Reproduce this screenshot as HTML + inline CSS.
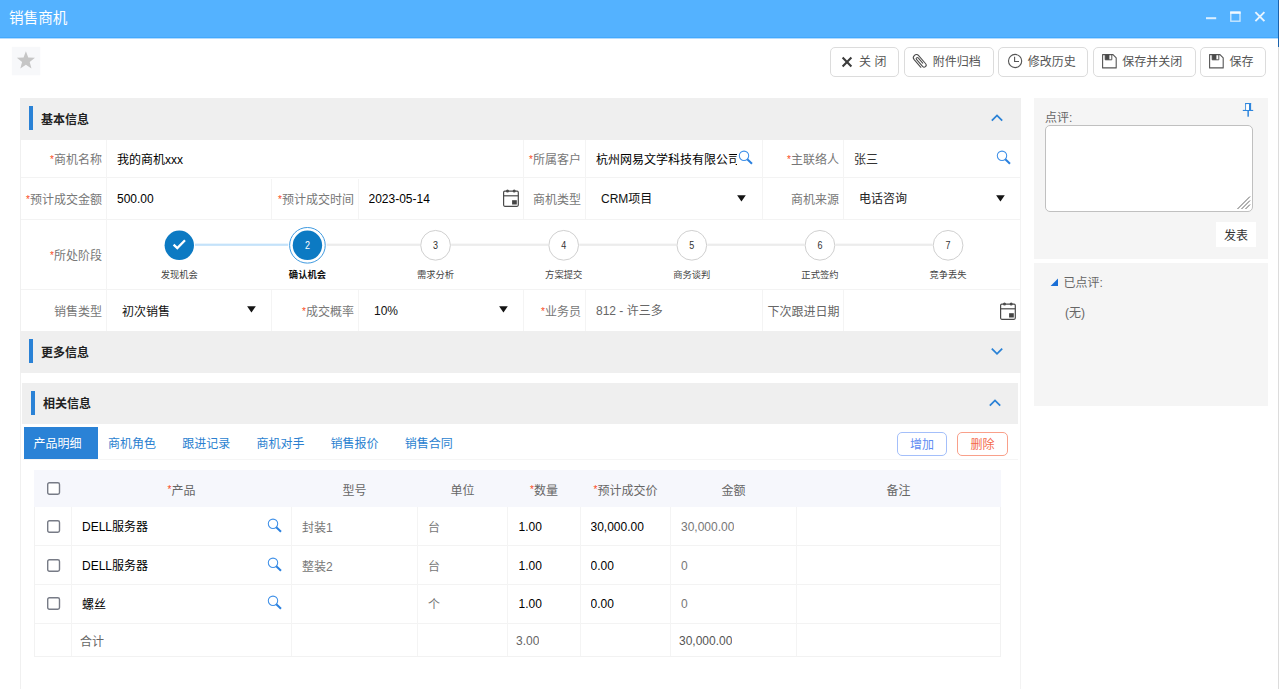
<!DOCTYPE html>
<html lang="zh-CN">
<head>
<meta charset="utf-8">
<title>销售商机</title>
<style>
*{box-sizing:border-box;margin:0;padding:0}
html,body{width:1279px;height:689px;overflow:hidden;background:#fff}
body{position:relative;font-family:"Liberation Sans","Noto Sans CJK SC",sans-serif;font-size:12px;color:#000;line-height:1}
.abs{position:absolute}
/* title bar */
#titlebar{left:0;top:0;width:1278px;height:38px;background:#54b2ff}
#titlebar .t{left:9px;top:0;line-height:36px;font-size:14.6px;color:#fff}
#edge{left:1278px;top:0;width:1px;height:689px;background:#dcdcdc}
#edge i{display:block;width:1px;height:47px;background:#1c63ad}
/* toolbar */
.btn{top:47px;height:29.5px;border:1px solid #dcdcdc;border-radius:5px;background:#fff;color:#555;font-size:12px;line-height:29px;white-space:nowrap}
.btn svg{position:absolute}
.btn span{position:absolute;top:0;height:29px}
/* left panel */
#lpanel{left:20px;top:98px;width:1001px;height:600px;border-left:1px solid #f0f0f0;border-right:1px solid #f3f3f3}
.sec{height:42px;background:#efefef}
.sec b{position:absolute;font-size:12px;font-weight:bold;color:#222;line-height:42px;top:0}
.sec i{position:absolute;width:4px;height:24px;background:#2a82d6}
.sec svg{position:absolute}
.hl{height:1px;background:#f3f3f3}
.vl{width:1px;background:#f4f4f4}
.lab{color:#777;text-align:right;white-space:nowrap;height:20px;line-height:20px;transform:translateY(0.7px)}
.lab em{color:#fa4a20;font-style:normal;font-size:10px;position:relative;top:-1.5px}
.val{white-space:nowrap;height:20px;line-height:20px;overflow:hidden}
/* tabs */
.tab{top:427px;height:32.4px;line-height:34px;color:#2a7fd0;padding-left:10px;width:74.3px;white-space:nowrap}
.tab.on{background:#2a82d6;color:#fff}
.sbtn{top:432px;height:24px;border-radius:5px;line-height:24px;text-align:center;background:#fff}
/* grid */
#grid{left:34px;top:470px;width:967px;height:187px;border:1px solid #f2f2f2}
.th{color:#666;text-align:center;top:471px;height:36px;line-height:38px;transform:translateY(0.5px)}
.th em{color:#fa4a20;font-style:normal;font-size:10px;position:relative;top:-2px;line-height:1}
.g{color:#777}
.cj{transform:translateY(0.7px)}
/* right */
.rp{left:1034px;width:234px;background:#f5f5f5}
</style>
</head>
<body>
<div id="titlebar" class="abs">
  <div class="abs t">销售商机</div>
  <svg class="abs" style="left:1200px;top:8px" width="70" height="20" viewBox="0 0 70 20">
    <rect x="6" y="9.2" width="10.2" height="2" fill="#dcefff"/>
    <rect x="30.8" y="4.4" width="9.2" height="8.8" fill="none" stroke="#d2eaff" stroke-width="1.3"/>
    <rect x="30.2" y="3.4" width="10.4" height="2.4" fill="#f2f9ff"/>
    <path d="M55.4 4.2 L64.4 13.2 M64.4 4.2 L55.4 13.2" stroke="#e8f4ff" stroke-width="1.9" fill="none"/>
  </svg>
</div>
<div class="abs" style="left:0;top:37px;width:1278px;height:1px;background:#43a9fd"></div>
<div class="abs" style="left:0;top:38px;width:1278px;height:1px;background:#b4dcfe"></div>
<div id="edge" class="abs"><i></i></div>

<svg class="abs" style="left:11px;top:46px" width="31" height="31" viewBox="0 0 31 31"><rect x="0.8" y="0.8" width="28.5" height="28.5" fill="#f7f8fa"/><path d="M14.90 5.30 L17.25 11.56 L23.94 11.86 L18.70 16.04 L20.48 22.49 L14.90 18.80 L9.32 22.49 L11.10 16.04 L5.86 11.86 L12.55 11.56 Z" fill="#c6c6c6"/></svg>

<!-- toolbar -->
<div class="abs btn" style="left:830.3px;width:69.2px">
  <svg style="left:10px;top:7.5px" width="12" height="12" viewBox="0 0 12 12"><path d="M1.6 1.6 L10.4 10.4 M10.4 1.6 L1.6 10.4" stroke="#3c3c3c" stroke-width="2.1" fill="none"/></svg>
  <span style="left:27.8px">关 闭</span>
</div>
<div class="abs btn" style="left:904px;width:89.5px">
  <svg style="left:6px;top:4px" width="18" height="18" viewBox="0 0 18 18"><g transform="translate(8.6 9.3) rotate(229) scale(0.93) translate(-8.75 -3.2)"><path d="M3 0 L14 0 A3.2 3.2 0 0 1 14 6.4 L2.5 6.4 A2.2 2.2 0 0 1 2.5 2 L12.5 2 A1.2 1.2 0 0 1 12.5 4.4 L5 4.4" stroke="#4d4d4d" stroke-width="1.15" fill="none" stroke-linecap="round"/></g></svg>
  <span style="left:27.8px">附件归档</span>
</div>
<div class="abs btn" style="left:998.2px;width:90.3px">
  <svg style="left:7.7px;top:4.3px" width="18" height="18" viewBox="0 0 18 18"><circle cx="8.1" cy="9" r="6.6" stroke="#555" stroke-width="1.1" fill="none"/><path d="M7.6 4.8 V9.5 H12" stroke="#555" stroke-width="1.1" fill="none"/></svg>
  <span style="left:28.5px">修改历史</span>
</div>
<div class="abs btn" style="left:1092.5px;width:103.3px">
  <svg style="left:8.6px;top:5.5px" width="16" height="16" viewBox="0 0 16 16"><path d="M0.6 0.6 H11 L14.2 3.8 V13.9 H0.6 Z" stroke="#555" stroke-width="1.1" fill="none" stroke-linejoin="round"/><path d="M3.2 0.6 V5.8 H9.8 V0.6" stroke="#555" stroke-width="1" fill="none"/><rect x="3.2" y="0.6" width="4.2" height="5.2" fill="#4a4a4a"/></svg>
  <span style="left:28.8px">保存并关闭</span>
</div>
<div class="abs btn" style="left:1199.8px;width:66.2px">
  <svg style="left:8.6px;top:5.5px" width="16" height="16" viewBox="0 0 16 16"><path d="M0.6 0.6 H11 L14.2 3.8 V13.9 H0.6 Z" stroke="#555" stroke-width="1.1" fill="none" stroke-linejoin="round"/><path d="M3.2 0.6 V5.8 H9.8 V0.6" stroke="#555" stroke-width="1" fill="none"/><rect x="3.2" y="0.6" width="4.2" height="5.2" fill="#4a4a4a"/></svg>
  <span style="left:28.8px">保存</span>
</div>

<div id="lpanel" class="abs"></div>

<!-- ===== 基本信息 ===== -->
<div class="abs sec" style="left:20px;top:98px;width:1001px">
  <i style="left:9px;top:8px"></i><b style="left:21px;top:1px">基本信息</b>
  <svg style="left:970px;top:14.3px" width="14" height="12" viewBox="0 0 14 12"><path d="M1.8 8.6 L7 3.4 L12.2 8.6" stroke="#2a82d6" stroke-width="1.8" fill="none"/></svg>
</div>

<!-- horizontal lines -->
<div class="abs hl" style="left:21px;top:177px;width:1000px"></div>
<div class="abs hl" style="left:21px;top:219px;width:1000px"></div>
<div class="abs hl" style="left:21px;top:289px;width:1000px"></div>
<!-- vertical lines -->
<div class="abs vl" style="left:106px;top:140px;height:191px"></div>
<div class="abs vl" style="left:523px;top:140px;height:79px"></div>
<div class="abs vl" style="left:585px;top:140px;height:79px"></div>
<div class="abs vl" style="left:762px;top:140px;height:79px"></div>
<div class="abs vl" style="left:843px;top:140px;height:79px"></div>
<div class="abs vl" style="left:271px;top:179px;height:40px"></div>
<div class="abs vl" style="left:358px;top:179px;height:40px"></div>
<div class="abs vl" style="left:271px;top:290px;height:41px"></div>
<div class="abs vl" style="left:358px;top:290px;height:41px"></div>
<div class="abs vl" style="left:523px;top:290px;height:41px"></div>
<div class="abs vl" style="left:585px;top:290px;height:41px"></div>
<div class="abs vl" style="left:762px;top:290px;height:41px"></div>
<div class="abs vl" style="left:843px;top:290px;height:41px"></div>

<!-- row 1 -->
<div class="abs lab" style="left:21px;width:81px;top:149px"><em>*</em>商机名称</div>
<div class="abs val cj" style="left:117px;top:149px;width:380px">我的商机xxx</div>
<div class="abs lab" style="left:524px;width:57px;top:149px"><em>*</em>所属客户</div>
<div class="abs val cj" style="left:596px;top:149px;width:140.7px">杭州网易文学科技有限公司</div>
<svg class="abs" style="left:737.9px;top:150.2px" width="16" height="16" viewBox="0 0 16 16"><circle cx="6" cy="5.8" r="4.7" stroke="#3f90e8" stroke-width="1.05" fill="none"/><path d="M9.3 9.2 L14 13.7" stroke="#2a80df" stroke-width="2"/></svg>
<div class="abs lab" style="left:763px;width:76px;top:149px"><em>*</em>主联络人</div>
<div class="abs val cj" style="left:854px;top:149px;width:130px;color:#333">张三</div>
<svg class="abs" style="left:996.2px;top:150.2px" width="16" height="16" viewBox="0 0 16 16"><circle cx="6" cy="5.8" r="4.7" stroke="#3f90e8" stroke-width="1.05" fill="none"/><path d="M9.3 9.2 L14 13.7" stroke="#2a80df" stroke-width="2"/></svg>

<!-- row 2 -->
<div class="abs lab" style="left:21px;width:81px;top:189px"><em>*</em>预计成交金额</div>
<div class="abs val" style="left:117px;top:189px;width:140px">500.00</div>
<div class="abs lab" style="left:272px;width:82px;top:189px"><em>*</em>预计成交时间</div>
<div class="abs val" style="left:368.5px;top:189px;width:120px">2023-05-14</div>
<svg class="abs" style="left:502px;top:188px" width="18" height="20" viewBox="0 0 18 20"><rect x="1.6" y="3.2" width="14.7" height="15.1" rx="1.2" stroke="#4a4a4a" stroke-width="1.2" fill="none"/><path d="M1.6 7.8 H16.3" stroke="#4a4a4a" stroke-width="1.2"/><circle cx="5.5" cy="3" r="1.5" fill="#4a4a4a"/><circle cx="12.2" cy="3" r="1.5" fill="#4a4a4a"/><rect x="10.1" y="12.2" width="4.7" height="4.3" fill="#444"/></svg>
<div class="abs lab" style="left:524px;width:57px;top:189px">商机类型</div>
<div class="abs val" style="left:601px;top:189px;width:120px;color:#111">CRM项目</div>
<svg class="abs" style="left:737.0px;top:194.5px" width="10" height="8" viewBox="0 0 10 8"><path d="M0.1 0.3 H8.8 L4.45 6.6 Z" fill="#141414"/></svg>
<div class="abs lab" style="left:763px;width:76px;top:189px">商机来源</div>
<div class="abs val" style="left:859px;top:189px;width:120px;color:#222">电话咨询</div>
<svg class="abs" style="left:995.5px;top:194.5px" width="10" height="8" viewBox="0 0 10 8"><path d="M0.1 0.3 H8.8 L4.45 6.6 Z" fill="#141414"/></svg>

<!-- stage row -->
<div class="abs lab" style="left:21px;width:81px;top:245px"><em>*</em>所处阶段</div>
<svg class="abs" style="left:107px;top:220px" width="913" height="69" viewBox="0 0 913 69" font-family="'Liberation Sans','Noto Sans CJK SC',sans-serif">
<rect x="87.90" y="23.65" width="93.33" height="2.2" fill="#c4e2fa"/>
<rect x="219.63" y="23.65" width="93.33" height="2.2" fill="#ececec"/>
<rect x="344.16" y="23.65" width="96.93" height="2.2" fill="#ececec"/>
<rect x="472.29" y="23.65" width="96.93" height="2.2" fill="#ececec"/>
<rect x="600.42" y="23.65" width="96.93" height="2.2" fill="#ececec"/>
<rect x="728.55" y="23.65" width="96.93" height="2.2" fill="#ececec"/>
<circle cx="72.30" cy="25.30" r="14.7" fill="#0c7ac3"/>
<path d="M66.60 24.60 l3.7 3.5 l7.7 -7.8" stroke="#fff" stroke-width="2.3" fill="none"/>
<text x="72.30" y="57.90" font-size="9.3" text-anchor="middle" fill="#444">发现机会</text>
<circle cx="200.43" cy="25.30" r="17.8" fill="#fff" stroke="#3f9ae0" stroke-width="1"/>
<circle cx="200.43" cy="25.30" r="14.7" fill="#0c7ac3"/>
<text x="200.43" y="28.90" font-size="10.5" fill="#fff" text-anchor="middle" textLength="5" lengthAdjust="spacingAndGlyphs">2</text>
<text x="200.43" y="57.90" font-size="9.3" text-anchor="middle" font-weight="bold" fill="#111">确认机会</text>
<circle cx="328.56" cy="25.30" r="14.85" fill="#fff" stroke="#d0d0d0" stroke-width="1"/>
<text x="328.56" y="28.90" font-size="10.5" fill="#333" text-anchor="middle" textLength="5" lengthAdjust="spacingAndGlyphs">3</text>
<text x="328.56" y="57.90" font-size="9.3" text-anchor="middle" fill="#444">需求分析</text>
<circle cx="456.69" cy="25.30" r="14.85" fill="#fff" stroke="#d0d0d0" stroke-width="1"/>
<text x="456.69" y="28.90" font-size="10.5" fill="#333" text-anchor="middle" textLength="5" lengthAdjust="spacingAndGlyphs">4</text>
<text x="456.69" y="57.90" font-size="9.3" text-anchor="middle" fill="#444">方案提交</text>
<circle cx="584.82" cy="25.30" r="14.85" fill="#fff" stroke="#d0d0d0" stroke-width="1"/>
<text x="584.82" y="28.90" font-size="10.5" fill="#333" text-anchor="middle" textLength="5" lengthAdjust="spacingAndGlyphs">5</text>
<text x="584.82" y="57.90" font-size="9.3" text-anchor="middle" fill="#444">商务谈判</text>
<circle cx="712.95" cy="25.30" r="14.85" fill="#fff" stroke="#d0d0d0" stroke-width="1"/>
<text x="712.95" y="28.90" font-size="10.5" fill="#333" text-anchor="middle" textLength="5" lengthAdjust="spacingAndGlyphs">6</text>
<text x="712.95" y="57.90" font-size="9.3" text-anchor="middle" fill="#444">正式签约</text>
<circle cx="841.08" cy="25.30" r="14.85" fill="#fff" stroke="#d0d0d0" stroke-width="1"/>
<text x="841.08" y="28.90" font-size="10.5" fill="#333" text-anchor="middle" textLength="5" lengthAdjust="spacingAndGlyphs">7</text>
<text x="841.08" y="57.90" font-size="9.3" text-anchor="middle" fill="#444">竞争丢失</text>
</svg>

<!-- row 4 -->
<div class="abs lab" style="left:21px;width:81px;top:301px">销售类型</div>
<div class="abs val cj" style="left:122px;top:301px;width:110px;color:#111">初次销售</div>
<svg class="abs" style="left:247.0px;top:306.0px" width="10" height="8" viewBox="0 0 10 8"><path d="M0.1 0.3 H8.8 L4.45 6.6 Z" fill="#141414"/></svg>
<div class="abs lab" style="left:272px;width:82px;top:301px"><em>*</em>成交概率</div>
<div class="abs val" style="left:374px;top:301px;width:110px;color:#111">10%</div>
<svg class="abs" style="left:498.5px;top:306.0px" width="10" height="8" viewBox="0 0 10 8"><path d="M0.1 0.3 H8.8 L4.45 6.6 Z" fill="#141414"/></svg>
<div class="abs lab" style="left:524px;width:57px;top:301px"><em>*</em>业务员</div>
<div class="abs val" style="left:596px;top:301px;width:150px;color:#666">812 - 许三多</div>
<div class="abs lab" style="left:763px;width:76.5px;top:301px;color:#666">下次跟进日期</div>
<svg class="abs" style="left:998.9px;top:301px" width="18" height="20" viewBox="0 0 18 20"><rect x="1.6" y="3.2" width="14.7" height="15.1" rx="1.2" stroke="#4a4a4a" stroke-width="1.2" fill="none"/><path d="M1.6 7.8 H16.3" stroke="#4a4a4a" stroke-width="1.2"/><circle cx="5.5" cy="3" r="1.5" fill="#4a4a4a"/><circle cx="12.2" cy="3" r="1.5" fill="#4a4a4a"/><rect x="10.1" y="12.2" width="4.7" height="4.3" fill="#444"/></svg>

<!-- ===== 更多信息 ===== -->
<div class="abs sec" style="left:20px;top:331px;width:1001px;height:41.5px">
  <i style="left:9px;top:8px"></i><b style="left:21px;line-height:41px;top:2px">更多信息</b>
  <svg style="left:970px;top:14px" width="14" height="12" viewBox="0 0 14 12"><path d="M1.8 3.6 L7 8.8 L12.2 3.6" stroke="#2a82d6" stroke-width="1.8" fill="none"/></svg>
</div>

<!-- ===== 相关信息 ===== -->
<div class="abs sec" style="left:22px;top:382.5px;width:996px;height:41.5px">
  <i style="left:9px;top:8.5px"></i><b style="left:21px;line-height:41px;top:1px">相关信息</b>
  <svg style="left:966px;top:14px" width="14" height="12" viewBox="0 0 14 12"><path d="M1.8 8.6 L7 3.4 L12.2 8.6" stroke="#2a82d6" stroke-width="1.8" fill="none"/></svg>
</div>


<!-- tabs -->
<div class="abs hl" style="left:23px;top:459px;width:995px;background:#f5f5f5"></div>
<div class="abs tab on" style="left:23.5px">产品明细</div>
<div class="abs tab" style="left:98px">商机角色</div>
<div class="abs tab" style="left:172.2px">跟进记录</div>
<div class="abs tab" style="left:246.4px">商机对手</div>
<div class="abs tab" style="left:320.6px">销售报价</div>
<div class="abs tab" style="left:394.8px">销售合同</div>
<div class="abs sbtn" style="left:897px;width:50px;border:1px solid #a4bffa;color:#5f8df3">增加</div>
<div class="abs sbtn" style="left:957px;width:51px;border:1px solid #f9a08a;color:#f4694a">删除</div>

<!-- grid -->
<div id="grid" class="abs"></div>
<div class="abs" style="left:34px;top:470px;width:967px;height:37px;background:#f6f7fc"></div>
<div class="abs hl" style="left:35px;top:545px;width:965px"></div>
<div class="abs hl" style="left:35px;top:584px;width:965px"></div>
<div class="abs hl" style="left:35px;top:623px;width:965px"></div>
<div class="abs vl" style="left:71px;top:507px;height:149px"></div>
<div class="abs vl" style="left:291px;top:507px;height:149px"></div>
<div class="abs vl" style="left:417px;top:507px;height:149px"></div>
<div class="abs vl" style="left:507px;top:507px;height:149px"></div>
<div class="abs vl" style="left:580px;top:507px;height:149px"></div>
<div class="abs vl" style="left:670px;top:507px;height:149px"></div>
<div class="abs vl" style="left:796px;top:507px;height:149px"></div>

<div class="abs th" style="left:72px;width:219px"><em>*</em>产品</div>
<div class="abs th" style="left:292px;width:125px">型号</div>
<div class="abs th" style="left:418px;width:89px">单位</div>
<div class="abs th" style="left:508px;width:72px"><em>*</em>数量</div>
<div class="abs th" style="left:581px;width:89px"><em>*</em>预计成交价</div>
<div class="abs th" style="left:671px;width:125px">金额</div>
<div class="abs th" style="left:797px;width:203px">备注</div>

<svg class="abs" style="left:46.7px;top:482.1px" width="14" height="14" viewBox="0 0 14 14"><rect x="0.7" y="0.7" width="11.8" height="11.6" rx="1.7" fill="#fff" stroke="#777b86" stroke-width="1.4"/></svg>
<svg class="abs" style="left:46.7px;top:520px" width="14" height="14" viewBox="0 0 14 14"><rect x="0.7" y="0.7" width="11.8" height="11.6" rx="1.7" fill="#fff" stroke="#777b86" stroke-width="1.4"/></svg>
<svg class="abs" style="left:46.7px;top:558.5px" width="14" height="14" viewBox="0 0 14 14"><rect x="0.7" y="0.7" width="11.8" height="11.6" rx="1.7" fill="#fff" stroke="#777b86" stroke-width="1.4"/></svg>
<svg class="abs" style="left:46.7px;top:597px" width="14" height="14" viewBox="0 0 14 14"><rect x="0.7" y="0.7" width="11.8" height="11.6" rx="1.7" fill="#fff" stroke="#777b86" stroke-width="1.4"/></svg>

<div class="abs val" style="left:82px;top:517px">DELL服务器</div>
<div class="abs val" style="left:82px;top:555.5px">DELL服务器</div>
<div class="abs val cj" style="left:82px;top:594px">螺丝</div>
<div class="abs val g cj" style="left:80px;top:631px;color:#666">合计</div>
<svg class="abs" style="left:266.8px;top:518.3px" width="16" height="16" viewBox="0 0 16 16"><circle cx="6" cy="5.8" r="4.7" stroke="#3f90e8" stroke-width="1.05" fill="none"/><path d="M9.3 9.2 L14 13.7" stroke="#2a80df" stroke-width="2"/></svg><svg class="abs" style="left:266.8px;top:556.8px" width="16" height="16" viewBox="0 0 16 16"><circle cx="6" cy="5.8" r="4.7" stroke="#3f90e8" stroke-width="1.05" fill="none"/><path d="M9.3 9.2 L14 13.7" stroke="#2a80df" stroke-width="2"/></svg><svg class="abs" style="left:266.8px;top:595.3px" width="16" height="16" viewBox="0 0 16 16"><circle cx="6" cy="5.8" r="4.7" stroke="#3f90e8" stroke-width="1.05" fill="none"/><path d="M9.3 9.2 L14 13.7" stroke="#2a80df" stroke-width="2"/></svg>
<div class="abs val g cj" style="left:302px;top:517px">封装1</div>
<div class="abs val g cj" style="left:302px;top:555.5px">整装2</div>
<div class="abs val g cj" style="left:428px;top:517px">台</div>
<div class="abs val g cj" style="left:428px;top:555.5px">台</div>
<div class="abs val g cj" style="left:428px;top:594px">个</div>
<div class="abs val" style="left:518.5px;top:517px">1.00</div>
<div class="abs val" style="left:518.5px;top:555.5px">1.00</div>
<div class="abs val" style="left:518.5px;top:594px">1.00</div>
<div class="abs val g" style="left:516px;top:631px;color:#666">3.00</div>
<div class="abs val" style="left:590.5px;top:517px">30,000.00</div>
<div class="abs val" style="left:590.5px;top:555.5px">0.00</div>
<div class="abs val" style="left:590.5px;top:594px">0.00</div>
<div class="abs val g" style="left:681px;top:517px">30,000.00</div>
<div class="abs val g" style="left:681px;top:555.5px">0</div>
<div class="abs val g" style="left:681px;top:594px">0</div>
<div class="abs val g" style="left:679px;top:631px;color:#555">30,000.00</div>

<!-- ===== right panels ===== -->
<div class="abs rp" style="top:98px;height:161px"></div>
<div class="abs" style="left:1045px;top:107px;color:#666;height:20px;line-height:20px;transform:translateY(0.7px)">点评:</div>
<svg class="abs" style="left:1242px;top:102px" width="13" height="16" viewBox="0 0 13 16"><g fill="#2f86dd"><rect x="3.2" y="1" width="5.9" height="1.2"/><rect x="3.2" y="1" width="1" height="7.4"/><rect x="6.9" y="1" width="2.2" height="7.4"/><rect x="0.8" y="7.9" width="10.4" height="1.1"/><rect x="5.4" y="9" width="1.5" height="5.7"/></g><rect x="4.2" y="2.2" width="2.7" height="5.7" fill="#fff"/></svg>
<div class="abs" style="left:1045px;top:125px;width:208px;height:87px;background:#fff;border:1px solid #c0c0c0;border-radius:5px"></div>
<svg class="abs" style="left:1236px;top:195px" width="15" height="15" viewBox="0 0 15 15"><path d="M1.5 14 L14 1.5 M5.5 14 L14 5.5 M9.5 14 L14 9.5" stroke="#666" stroke-width="1" fill="none"/></svg>
<div class="abs" style="left:1216px;top:221.5px;width:40px;height:25.5px;background:#fff;color:#333;text-align:center;line-height:28px">发表</div>

<div class="abs rp" style="top:263px;height:143px"></div>
<svg class="abs" style="left:1050px;top:278px" width="9" height="9" viewBox="0 0 9 9"><path d="M8 0.6 V8 H0.6 Z" fill="#1a6fd6"/></svg>
<div class="abs" style="left:1063.5px;top:272px;color:#666;height:20px;line-height:20px;transform:translateY(0.7px)">已点评:</div>
<div class="abs" style="left:1065px;top:303px;color:#666;height:20px;line-height:20px">(无)</div>

</body>
</html>
